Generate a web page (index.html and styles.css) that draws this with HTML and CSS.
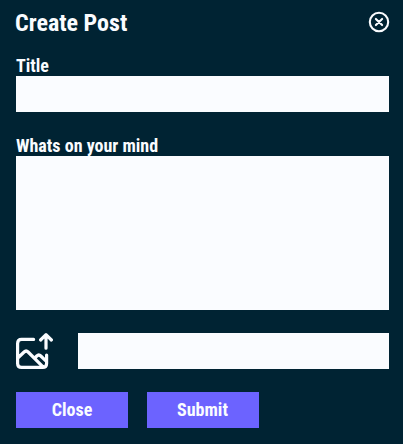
FILE: index.html
```html
<!DOCTYPE html>
<html lang="en">
<head>
<meta charset="utf-8">
<title>Create Post</title>
<link rel="stylesheet" href="styles.css">
</head>
<body>
<form class="post-form">
  <header class="header">
    <h1 class="heading"><span class="label-text">Create Post</span></h1>
    <button class="icon-button" type="button" aria-label="Close">
      <svg width="22" height="22" viewBox="0 0 22 22" fill="none" stroke="currentColor" stroke-width="2.1" stroke-linecap="round"><circle cx="11" cy="11" r="9.2"/><path d="M7.9 7.9l6.2 6.2M14.1 7.9l-6.2 6.2"/></svg>
    </button>
  </header>
  <label class="label" for="title"><span class="label-text">Title</span></label>
  <input class="field title-field" id="title" type="text">
  <label class="label" for="body"><span class="label-text">Whats on your mind</span></label>
  <textarea class="field body-field" id="body"></textarea>
  <div class="upload">
    <svg class="upload-icon" width="38" height="36" viewBox="0 0 38 36" fill="none" stroke="currentColor" stroke-width="3.2" stroke-linecap="round" stroke-linejoin="round"><path d="M17.6 6.4H5.6Q1.6 6.4 1.6 10.4v20q0 4 4 4h21q4 0 4-4V22M1.8 25l6.3-6q2-2 4 0L27 33.8M18.8 25l2-2q2-2 4 0l5.6 5.4M30 15.2V2M24.6 7L30 1.7 35.4 7"/></svg>
    <input class="field upload-field" type="text" aria-label="Image">
  </div>
  <div class="actions">
    <button class="button" type="button"><span class="label-text">Close</span></button>
    <button class="button submit" type="button"><span class="label-text">Submit</span></button>
  </div>
</form>
</body>
</html>
```
FILE: styles.css
```css
* { box-sizing: border-box; }
body { margin: 0; background: #002333; color: #fafcff; font-family: Roboto, sans-serif; }
.post-form { height: 444px; padding: 11px 14px 0 16px; }
.header { display: flex; justify-content: space-between; height: 45px; margin: 0 -1px; }
.heading { margin: 0; font-size: 24px; line-height: 24px; font-weight: 700; }
.label-text { display: inline-block; font-stretch: 75%; }
.icon-button { width: 22px; height: 22px; padding: 0; border: 0; background: none; color: inherit; }
.label { display: block; height: 20px; font-size: 18px; line-height: 20px; font-weight: 700; }
.field { display: block; width: 100%; border: 0; border-radius: 0; margin: 0; padding: 8px; background: #fafcff; }
.title-field { height: 36px; margin-bottom: 24px; }
.body-field { height: 154px; resize: none; }
.upload { display: flex; gap: 24px; margin-top: 23px; }
.upload-icon { flex: none; }
.upload-field { height: 36px; flex: 1; }
.actions { display: flex; gap: 19px; margin-top: 23px; }
.button { width: 112px; height: 36px; padding: 0; border: 0; background: #6c63ff; color: inherit; font: 700 18px/36px Roboto, sans-serif; }
.submit { padding-right: 1px; }
```
